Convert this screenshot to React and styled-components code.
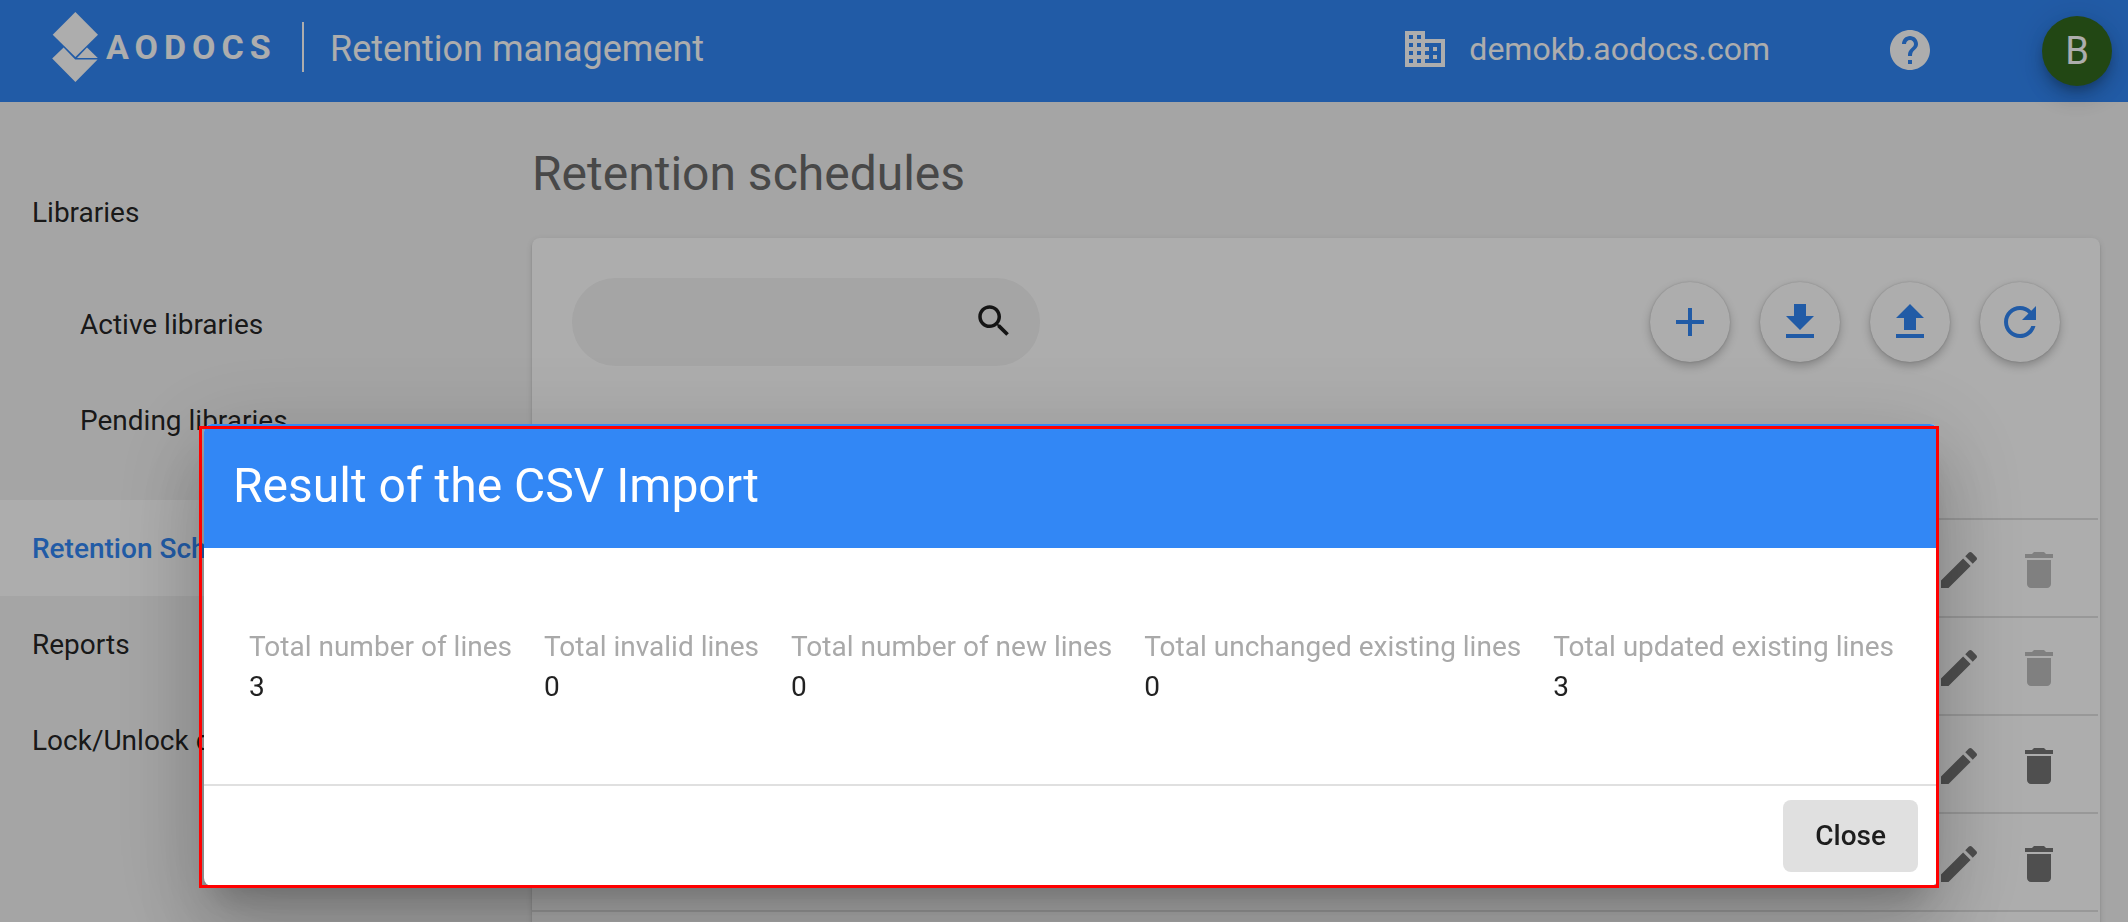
import React from "react";
import styled, { createGlobalStyle, css } from "styled-components";

const GlobalStyle = createGlobalStyle`
  *, *::before, *::after { box-sizing: border-box; }
  body {
    margin: 0;
    height: 100vh;
    overflow: hidden;
    background: #f3f3f3;
    color: rgba(0, 0, 0, 0.87);
    font: 400 28px/40px Roboto, "Liberation Sans", sans-serif;
  }
  h1, h2, dl, dd, ul { margin: 0; padding: 0; }
`;

const BLUE = "#3287f5";

const TopBar = styled.header`
  display: flex;
  align-items: center;
  height: 102px;
  padding: 0 16px 0 52px;
  background: ${BLUE};
  color: #fff;
`;

const Brand = styled.a`
  display: flex;
  align-items: center;
  gap: 8px;
  padding-bottom: 8px;
  color: inherit;
  text-decoration: none;
`;

const Wordmark = styled.span`
  width: 174px;
  font: 700 34px/48px Roboto, sans-serif;
  letter-spacing: 6px;
`;

const Divider = styled.span`
  width: 2px;
  height: 50px;
  margin: 0 26px 8px 22px;
  background: #fff;
`;

const AppName = styled.span`
  flex: 1;
  font-size: 36px;
  line-height: 48px;
  padding-bottom: 4px;
`;

const Domain = styled.span`
  display: flex;
  align-items: center;
  gap: 20px;
  padding-bottom: 4px;
  font-size: 32px;
  line-height: 48px;
`;

const HelpButton = styled.button`
  display: flex;
  margin: 0 108px 0 116px;
  padding: 0 0 2px;
  border: 0;
  background: none;
  color: inherit;
`;

const Avatar = styled.button`
  width: 70px;
  height: 70px;
  padding: 0;
  border: 0;
  border-radius: 50%;
  background: #33691e;
  color: #fff;
  font: 400 38px/70px Roboto, sans-serif;
  box-shadow: 0 6px 10px -2px rgba(0, 0, 0, 0.2), 0 12px 20px rgba(0, 0, 0, 0.14),
    0 2px 36px rgba(0, 0, 0, 0.12);
`;

const Layout = styled.div`
  display: flex;
`;

const SideNav = styled.nav`
  flex: 0 0 500px;
  padding-top: 62px;
`;

const NavList = styled.ul`
  list-style: none;
`;

const NavLink = styled.a`
  display: block;
  height: 96px;
  margin-bottom: ${(p) => p.$gap || 0}px;
  padding-left: ${(p) => (p.$nested ? 80 : 32)}px;
  line-height: 98px;
  color: inherit;
  text-decoration: none;
  white-space: nowrap;
  ${(p) =>
    p.$active &&
    css`
      background: #fff;
      color: ${BLUE};
      font-weight: 500;
    `}
`;

const Main = styled.main`
  flex: 1;
  padding: 44px 28px 0 32px;
`;

const PageTitle = styled.h1`
  margin-bottom: 36px;
  color: #6a6a6a;
  font-weight: 400;
  font-size: 48px;
  line-height: 56px;
`;

const Card = styled.section`
  border-radius: 8px;
  background: #fff;
  box-shadow: 0 4px 2px -2px rgba(0, 0, 0, 0.2), 0 2px 2px rgba(0, 0, 0, 0.14),
    0 2px 6px rgba(0, 0, 0, 0.12);
`;

const Toolbar = styled.div`
  display: flex;
  align-items: center;
  justify-content: space-between;
  padding: 40px;
`;

const SearchBox = styled.label`
  display: flex;
  align-items: center;
  width: 468px;
  height: 88px;
  padding: 0 25px 2px 40px;
  border-radius: 44px;
  background: #f3f3f3;
`;

const SearchInput = styled.input`
  flex: 1;
  min-width: 0;
  border: 0;
  outline: 0;
  background: none;
  font: inherit;
`;

const Actions = styled.div`
  display: flex;
  gap: 30px;
`;

const RoundButton = styled.button`
  display: grid;
  place-items: center;
  width: 80px;
  height: 80px;
  padding: 0;
  border: 0;
  border-radius: 50%;
  background: #fff;
  color: ${BLUE};
  box-shadow: 0 4px 10px rgba(0, 0, 0, 0.24), 0 0 2px rgba(0, 0, 0, 0.2);
`;

const Schedules = styled.table`
  width: calc(100% - 2px);
  margin-top: 112px;
  border-spacing: 0;
`;

const Cell = styled.td`
  height: 98px;
  padding: 4px 35px 0 0;
  border-top: 2px solid rgba(0, 0, 0, 0.12);
`;

const RowActions = styled.div`
  display: flex;
  justify-content: flex-end;
  gap: 32px;
`;

const IconButton = styled.button`
  display: flex;
  padding: 0;
  border: 0;
  background: none;
  color: #757575;
  &:disabled { color: #bdbdbd; }
`;

const Backdrop = styled.div`
  position: fixed;
  inset: 0;
  display: flex;
  align-items: flex-start;
  padding: 424px 190px 0 204px;
  background: rgba(0, 0, 0, 0.32);
`;

const Dialog = styled.section`
  position: relative;
  flex: 1;
  min-width: 0;
  border-radius: 8px;
  background: #fff;
  box-shadow: 0 22px 30px -14px rgba(0, 0, 0, 0.2), 0 48px 76px 6px rgba(0, 0, 0, 0.14),
    0 18px 92px 16px rgba(0, 0, 0, 0.12);

  &::after {
    content: "";
    position: absolute;
    inset: 2px -1px -2px -5px;
    border: 3px solid #f00;
    pointer-events: none;
  }
`;

const DialogTitle = styled.h2`
  padding: 34px 29px;
  border-radius: 8px 8px 0 0;
  background: ${BLUE};
  color: #fff;
  font-weight: 400;
  font-size: 48px;
  line-height: 56px;
`;

const Stats = styled.dl`
  display: flex;
  gap: 32px;
  padding: 79px 32px 77px 45px;
  white-space: nowrap;
`;

const StatLabel = styled.dt`
  color: #a9a9a9;
`;

const DialogFooter = styled.footer`
  display: flex;
  justify-content: flex-end;
  padding: 14px 20px;
  border-top: 2px solid #e0e0e0;
`;

const CloseButton = styled.button`
  height: 72px;
  padding: 0 32px;
  border: 0;
  border-radius: 8px;
  background: #e0e0e0;
  color: rgba(0, 0, 0, 0.87);
  font: 500 28px/72px Roboto, sans-serif;
`;

const PATHS = {
  domain:
    "M12 7V3H2v18h20V7H12zM6 19H4v-2h2v2zm0-4H4v-2h2v2zm0-4H4V9h2v2zm0-4H4V5h2v2zm4 12H8v-2h2v2zm0-4H8v-2h2v2zm0-4H8V9h2v2zm0-4H8V5h2v2zm10 12h-8v-2h2v-2h-2v-2h2v-2h-2V9h8v10zm-2-8h-2v2h2v-2zm0 4h-2v2h2v-2z",
  help: "M12 2C6.48 2 2 6.48 2 12s4.48 10 10 10 10-4.48 10-10S17.52 2 12 2zm1 17h-2v-2h2v2zm2.07-7.75l-.9.92C13.45 12.9 13 13.5 13 15h-2v-.5c0-1.1.45-2.1 1.17-2.83l1.24-1.26c.37-.36.59-.86.59-1.41 0-1.1-.9-2-2-2s-2 .9-2 2H8c0-2.21 1.79-4 4-4s4 1.79 4 4c0 .88-.36 1.68-.93 2.25z",
  search:
    "M15.5 14h-.79l-.28-.27C15.41 12.59 16 11.11 16 9.5 16 5.91 13.09 3 9.5 3S3 5.91 3 9.5 5.91 16 9.5 16c1.61 0 3.09-.59 4.23-1.57l.27.28v.79l5 4.99L20.49 19l-4.99-5zm-6 0C7.01 14 5 11.99 5 9.5S7.01 5 9.5 5 14 7.01 14 9.5 11.99 14 9.5 14z",
  add: "M19 13h-6v6h-2v-6H5v-2h6V5h2v6h6v2z",
  download: "M19 9h-4V3H9v6H5l7 7 7-7zM5 18v2h14v-2H5z",
  upload: "M9 16h6v-6h4l-7-7-7 7h4zm-4 2h14v2H5z",
  refresh:
    "M17.65 6.35C16.2 4.9 14.21 4 12 4c-4.42 0-7.99 3.58-7.99 8s3.57 8 7.99 8c3.73 0 6.84-2.55 7.73-6h-2.08c-.82 2.33-3.04 4-5.65 4-3.31 0-6-2.69-6-6s2.69-6 6-6c1.66 0 3.14.69 4.22 1.78L13 11h7V4l-2.35 2.35z",
  edit: "M3 17.25V21h3.75L17.81 9.94l-3.75-3.75L3 17.25zM20.71 7.04c.39-.39.39-1.02 0-1.41l-2.34-2.34c-.39-.39-1.02-.39-1.41 0l-1.83 1.83 3.75 3.75 1.83-1.83z",
  trash: "M6 19c0 1.1.9 2 2 2h8c1.1 0 2-.9 2-2V7H6v12zM19 4h-3.5l-1-1h-5l-1 1H5v2h14V4z",
};

function Icon({ name, size = 48 }) {
  return (
    <svg width={size} height={size} viewBox="0 0 24 24" fill="currentColor" aria-hidden="true">
      <path d={PATHS[name]} />
    </svg>
  );
}

function Logo() {
  return (
    <svg width="46" height="70" viewBox="0 0 46 70" fill="currentColor" aria-hidden="true">
      <path d="M23.4 0 46 22.7 23.4 45 .7 22.7z" />
      <path d="M11.6 35.6 23.2 47.6H45.6L23.4 70 .2 46.6z" />
      <path d="M35 35.6 45.8 46H25z" />
    </svg>
  );
}

const NAV = [
  { label: "Libraries", gap: 16 },
  { label: "Active libraries", nested: true },
  { label: "Pending libraries", nested: true, gap: 32 },
  { label: "Retention Schedules", active: true },
  { label: "Reports" },
  { label: "Lock/Unlock documents" },
];

const ACTIONS = [
  ["add", "Add"],
  ["download", "Export"],
  ["upload", "Import"],
  ["refresh", "Refresh"],
];

const ROWS = [
  { id: 1, locked: true },
  { id: 2, locked: true },
  { id: 3 },
  { id: 4 },
  { id: 5 },
];

const STATS = [
  ["Total number of lines", 3],
  ["Total invalid lines", 0],
  ["Total number of new lines", 0],
  ["Total unchanged existing lines", 0],
  ["Total updated existing lines", 3],
];

export default function App() {
  return (
    <>
      <GlobalStyle />
      <TopBar>
        <Brand href="#home">
          <Logo />
          <Wordmark>AODOCS</Wordmark>
        </Brand>
        <Divider />
        <AppName>Retention management</AppName>
        <Domain>
          <Icon name="domain" />
          demokb.aodocs.com
        </Domain>
        <HelpButton aria-label="Help">
          <Icon name="help" />
        </HelpButton>
        <Avatar>B</Avatar>
      </TopBar>

      <Layout>
        <SideNav>
          <NavList>
            {NAV.map((item) => (
              <li key={item.label}>
                <NavLink href="#nav" $nested={item.nested} $active={item.active} $gap={item.gap}>
                  {item.label}
                </NavLink>
              </li>
            ))}
          </NavList>
        </SideNav>

        <Main>
          <PageTitle>Retention schedules</PageTitle>
          <Card>
            <Toolbar>
              <SearchBox>
                <SearchInput type="text" aria-label="Search" />
                <Icon name="search" size={42} />
              </SearchBox>
              <Actions>
                {ACTIONS.map(([icon, label]) => (
                  <RoundButton key={icon} aria-label={label}>
                    <Icon name={icon} />
                  </RoundButton>
                ))}
              </Actions>
            </Toolbar>
            <Schedules>
              <tbody>
                {ROWS.map((row) => (
                  <tr key={row.id}>
                    <Cell>
                      <RowActions>
                        <IconButton aria-label="Edit">
                          <Icon name="edit" />
                        </IconButton>
                        <IconButton aria-label="Delete" disabled={row.locked}>
                          <Icon name="trash" />
                        </IconButton>
                      </RowActions>
                    </Cell>
                  </tr>
                ))}
              </tbody>
            </Schedules>
          </Card>
        </Main>
      </Layout>

      <Backdrop>
        <Dialog role="dialog" aria-modal="true" aria-labelledby="import-title">
          <DialogTitle id="import-title">Result of the CSV Import</DialogTitle>
          <Stats>
            {STATS.map(([label, value]) => (
              <div key={label}>
                <StatLabel>{label}</StatLabel>
                <dd>{value}</dd>
              </div>
            ))}
          </Stats>
          <DialogFooter>
            <CloseButton>Close</CloseButton>
          </DialogFooter>
        </Dialog>
      </Backdrop>
    </>
  );
}
